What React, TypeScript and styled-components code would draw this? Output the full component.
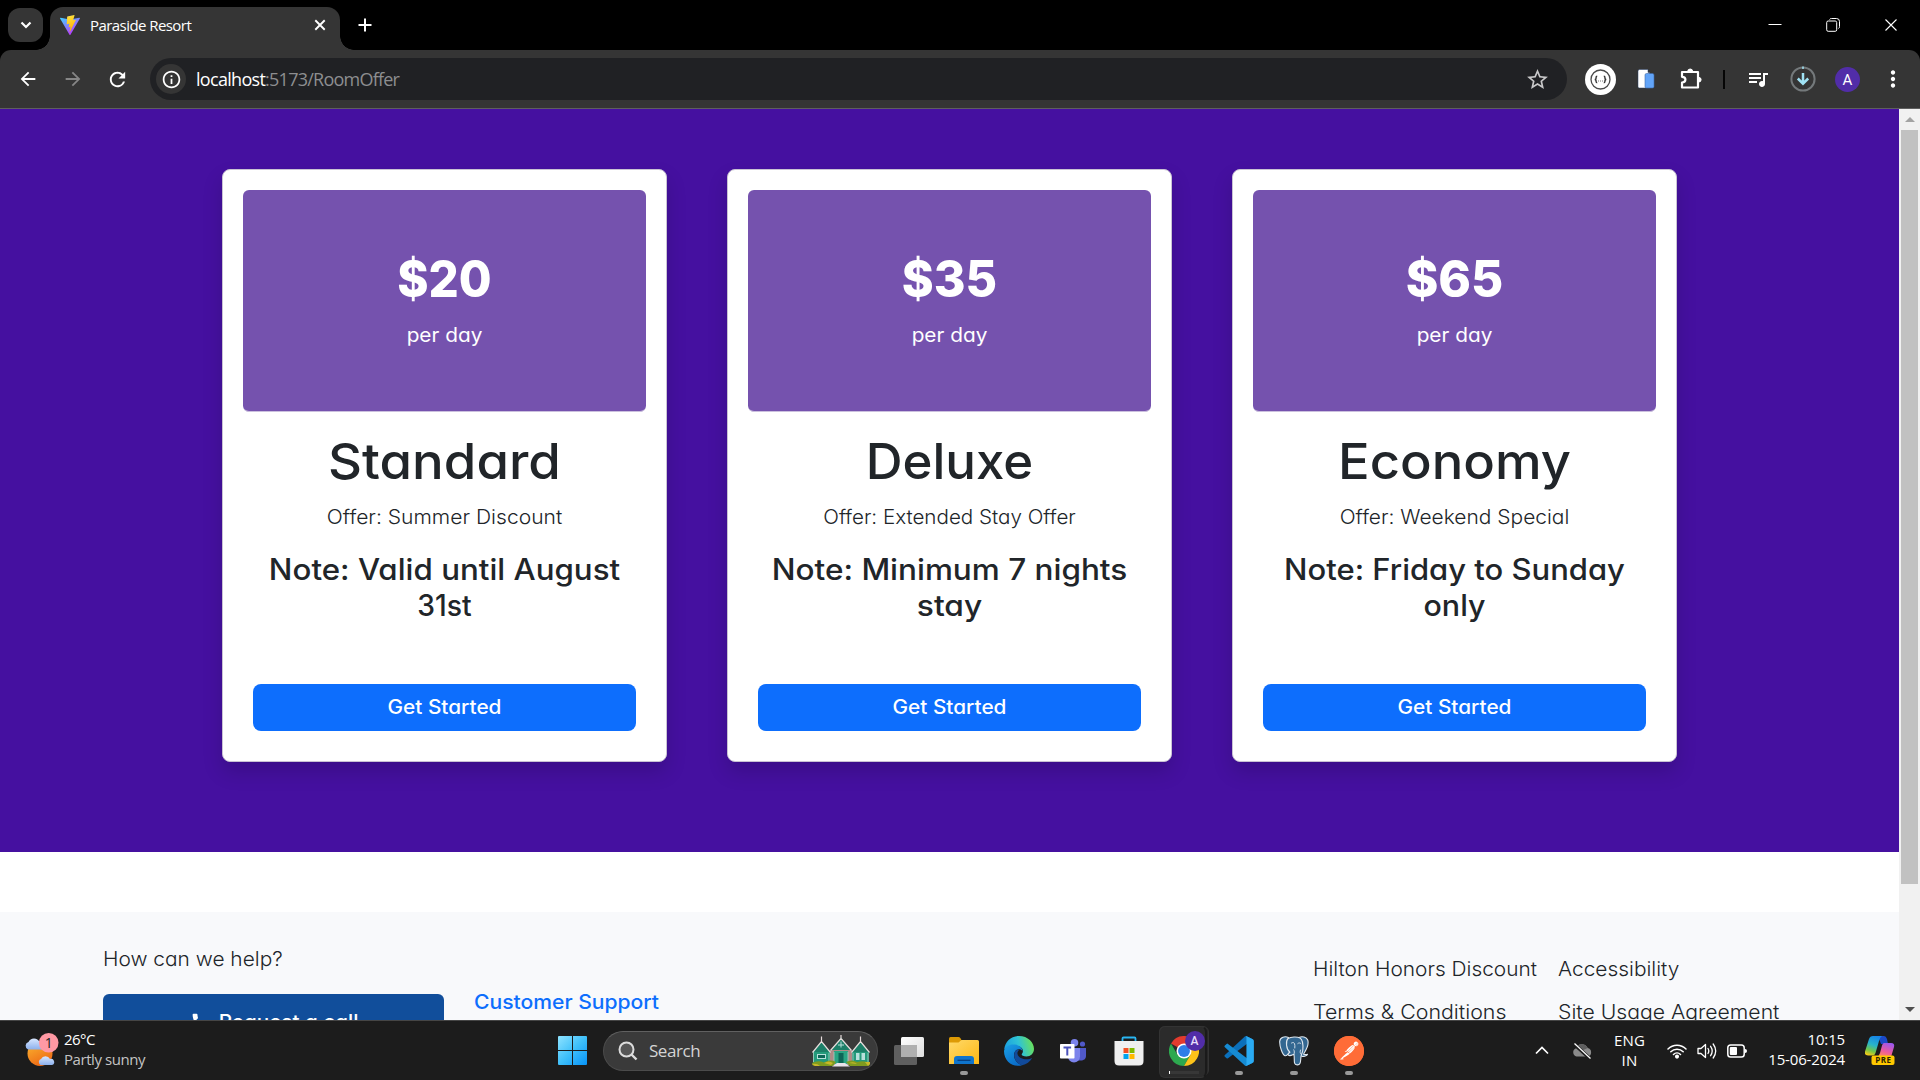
import React from "react";
import styled, { createGlobalStyle } from "styled-components";
import { MdArrowBack, MdArrowForward, MdRefresh, MdStarOutline, MdQueueMusic, MdInfoOutline, MdMoreVert, MdPhone } from "react-icons/md";
import { SiPostman } from "react-icons/si";

const ui = `"Open Sans", "Noto Sans", sans-serif`;
const body = `Inter, "Liberation Sans", sans-serif`;

const GlobalStyle = createGlobalStyle`
  * { box-sizing: border-box; }
  body { margin: 0; overflow: hidden; background: #000; }
  p, h1, h2, h3 { margin: 0; }
  svg { display: block; flex: none; }
`;

const Screen = styled.div`
  width: 1920px;
  height: 1080px;
  display: flex;
  flex-direction: column;
  overflow: hidden;
`;

/* ---------- Browser chrome ---------- */

const TabStrip = styled.div`
  height: 50px;
  flex: none;
  display: flex;
  background: #000;
  padding: 7px 0 0 8px;
  color: #fff;
`;

const TabSearch = styled.div`
  width: 35px;
  height: 34px;
  margin: 1px 7px 0 0;
  border-radius: 12px;
  background: #353535;
  display: grid;
  place-items: center;
`;

const Tab = styled.div`
  position: relative;
  width: 290px;
  height: 43px;
  padding: 0 14px 7px 10px;
  display: flex;
  align-items: center;
  border-radius: 13px 13px 0 0;
  background: #353535;
  &::before,
  &::after {
    content: "";
    position: absolute;
    bottom: 0;
    width: 14px;
    height: 14px;
  }
  &::before {
    left: -14px;
    background: radial-gradient(circle at 0 0, transparent 13.5px, #353535 14px);
  }
  &::after {
    right: -14px;
    background: radial-gradient(circle at 100% 0, transparent 13.5px, #353535 14px);
  }
`;

const TabTitle = styled.span`
  flex: 1;
  margin-left: 10px;
  font: 400 15px/20px ${ui};
  letter-spacing: -0.56px;
`;

const NewTab = styled.div`
  width: 20px;
  height: 36px;
  margin-left: 15px;
  display: grid;
  place-items: center;
`;

const WindowControls = styled.div`
  display: flex;
  align-items: center;
  gap: 44px;
  height: 35px;
  margin-left: auto;
  padding-right: 22px;
`;

const ToolbarBack = styled.div`
  background: #000;
  flex: none;
`;

const Toolbar = styled.div`
  height: 59px;
  display: flex;
  align-items: center;
  padding: 0 5px;
  background: #353535;
  border-bottom: 1px solid #5f5f5f;
  border-radius: 11px 11px 0 0;
  color: #fff;
`;

const ToolCell = styled.div<{ $dim?: boolean }>`
  width: 45px;
  height: 42px;
  display: grid;
  place-items: center;
  color: ${(p) => (p.$dim ? "#868686" : "#fff")};
`;

const AddressBar = styled.div`
  width: 1417px;
  height: 42px;
  margin: 0 11px 0 10px;
  padding: 0 17px 0 6px;
  border-radius: 21px;
  background: #202124;
  display: flex;
  align-items: center;
`;

const SiteInfo = styled.div`
  width: 30px;
  height: 30px;
  border-radius: 50%;
  background: #353535;
  display: grid;
  place-items: center;
`;

const Url = styled.div`
  flex: 1;
  margin-left: 10px;
  font: 400 18px/24px ${ui};
  letter-spacing: -0.7px;
  color: #fff;
  span { color: #8d8e90; letter-spacing: -0.76px; }
`;

const ToolDivider = styled.div`
  width: 2px;
  height: 19px;
  margin: 0 10px;
  background: #050505;
`;

const Avatar = styled.div`
  width: 25px;
  height: 25px;
  border-radius: 50%;
  background: #512da8;
  color: #fff;
  font: 400 15px/26px Roboto, sans-serif;
  text-align: center;
`;

/* ---------- Page ---------- */

const Viewport = styled.div`
  height: 911px;
  flex: none;
  display: flex;
  overflow: hidden;
  background: #fff;
`;

const Page = styled.div`
  width: 1899px;
  flex: none;
  font-family: ${body};
  font-feature-settings: "cv11";
  color: #212529;
`;

const Offers = styled.section`
  height: 743px;
  display: flex;
  justify-content: center;
  align-items: flex-start;
  gap: 60px;
  padding-top: 60px;
  background: #4510a0;
`;

const Card = styled.article`
  width: 445px;
  height: 593px;
  padding: 20px;
  display: flex;
  flex-direction: column;
  text-align: center;
  background: #fff;
  border: 1px solid #c9c3d3;
  border-radius: 8px;
  box-shadow: 0 10px 20px rgba(0, 0, 0, 0.15);
`;

const CardHeader = styled.div`
  height: 222px;
  padding-top: 59px;
  background: #7552ae;
  border-bottom: 1px solid #cbc0de;
  border-radius: 6px;
  color: #fff;
`;

const Stretch = styled.span<{ $by: number; $left?: boolean }>`
  display: block;
  white-space: nowrap;
  transform: scaleX(${(p) => p.$by});
  transform-origin: ${(p) => (p.$left ? "left" : "center")};
`;

const Price = styled.h2`
  font-size: 50.5px;
  font-weight: 800;
  line-height: 60px;
`;

const Per = styled.p`
  margin-top: 11px;
  font-size: 20px;
  line-height: 30px;
`;

const RoomType = styled.h1`
  margin-top: 19px;
  font-size: 50px;
  font-weight: 500;
  line-height: 60px;
`;

const OfferLine = styled.p`
  margin-top: 11px;
  font-size: 20px;
  font-weight: 300;
  line-height: 30px;
`;

const NoteLine = styled.h3`
  margin-top: 19px;
  font-size: 29.5px;
  font-weight: 500;
  line-height: 36px;
`;

const StartButton = styled.button`
  height: 47px;
  margin: 61px 10px 0;
  padding: 0 0 2px;
  border: 0;
  border-radius: 8px;
  background: #0d6efd;
  color: #fff;
  font: 450 20px/30px ${body};
  font-feature-settings: "cv11";
`;

const Footer = styled.footer`
  margin-top: 60px;
  height: 300px;
  padding: 32px 0 0 103px;
  display: flex;
  background: #f8f9fb;
  font-size: 20px;
  line-height: 30px;
  font-weight: 300;
`;

const HelpColumn = styled.div`
  width: 341px;
`;

const CallButton = styled.button`
  width: 341px;
  height: 60px;
  margin-top: 20px;
  padding: 0 0 5px 0;
  display: flex;
  justify-content: center;
  align-items: center;
  gap: 10px;
  border: 0;
  border-radius: 6px;
  background: #114e9b;
  color: #fff;
  font: 450 20px/30px ${body};
  font-feature-settings: "cv11";
`;

const SupportLink = styled.a`
  width: 839px;
  margin: 43px 0 0 30px;
  font-weight: 450;
  color: #0d6efd;
`;

const LinkColumn = styled.div<{ $width: number }>`
  width: ${(p) => p.$width}px;
  margin-top: 10px;
  display: flex;
  flex-direction: column;
  gap: 13px;
`;

const Scrollbar = styled.div`
  width: 21px;
  display: flex;
  flex-direction: column;
  align-items: center;
  background: #f1f1f1;
`;

const ScrollArrow = styled.div<{ $dim?: boolean }>`
  width: 21px;
  height: 21px;
  display: grid;
  place-items: center;
  color: ${(p) => (p.$dim ? "#a3a3a3" : "#505050")};
`;

const Thumb = styled.div`
  width: 17px;
  height: 754px;
  margin-bottom: auto;
  background: #c1c1c1;
`;

/* ---------- Taskbar ---------- */

const Taskbar = styled.div`
  height: 60px;
  flex: none;
  display: flex;
  align-items: center;
  background: #1c1c1c;
  border-top: 1px solid #454545;
  color: #fff;
  font: 400 15px/20px ${ui};
`;

const Weather = styled.div`
  width: 534px;
  padding-left: 24px;
  display: flex;
  align-items: center;
  gap: 5px;
`;

const WeatherLabels = styled.div`
  padding-bottom: 4px;
`;

const WeatherText = styled.div<{ $muted?: boolean }>`
  color: ${(p) => (p.$muted ? "#c4c4c4" : "#fff")};
  letter-spacing: ${(p) => (p.$muted ? -0.43 : -0.53)}px;
`;

const StartCell = styled.div`
  width: 69px;
  padding-left: 24px;
`;

const SearchBox = styled.div`
  width: 275px;
  height: 40px;
  padding: 0 7px 0 14px;
  display: flex;
  align-items: center;
  border: 1px solid #4b4b4b;
  border-top-color: #606060;
  border-radius: 20px;
  background: #3a3a3a;
`;

const SearchLabel = styled.span`
  flex: 1;
  margin-left: 11px;
  font-size: 17px;
  letter-spacing: -0.45px;
  color: #d4d4d4;
`;

const Apps = styled.div`
  display: flex;
  margin-left: 3px;
`;

const AppCell = styled.div`
  position: relative;
  width: 55px;
  height: 58px;
  display: grid;
  place-items: center;
`;

const RunningDot = styled.i`
  position: absolute;
  left: 24px;
  bottom: 5px;
  width: 8px;
  height: 4px;
  border-radius: 2px;
  background: #999;
`;

const ActiveTile = styled.div`
  position: relative;
  width: 50px;
  height: 50px;
  padding-left: 9px;
  display: flex;
  align-items: center;
  border-radius: 6px;
  border: 1px solid #333;
  background: #272727;
  &::before {
    content: "";
    position: absolute;
    left: -1px;
    top: -1px;
    width: 45px;
    height: 50px;
    border: 1px solid #333;
    border-right: 2px solid #1a1a1a;
    border-radius: 6px;
    background: #2b2b2b;
  }
  svg { position: relative; }
`;

const Progress = styled.i`
  position: absolute;
  left: 9px;
  bottom: 1px;
  width: 30px;
  height: 3px;
  border-left: 1px solid #fff;
  background: #373737;
`;

const Badge = styled.span`
  position: absolute;
  left: 25px;
  top: 4px;
  width: 20px;
  height: 20px;
  border-radius: 50%;
  background: #512da8;
  color: #e6defa;
  font: 500 12px/20px Roboto, sans-serif;
  text-align: center;
`;

const Tray = styled.div`
  margin-left: auto;
  display: flex;
  align-items: center;
  padding-right: 25px;
`;

const Language = styled.div`
  width: 75px;
  text-align: center;
  letter-spacing: 0.15px;
  padding-bottom: 2px;
`;

const TrayIcons = styled.div`
  display: flex;
  align-items: center;
  gap: 10px;
`;

const Clock = styled.div`
  width: 98px;
  margin-right: 20px;
  padding-bottom: 4px;
  text-align: right;
  letter-spacing: -0.15px;
`;

/* ---------- Drawings ---------- */

const ViteLogo = () => (
  <svg width="20" height="20" viewBox="0 0 32 32">
    <defs>
      <linearGradient id="va" x1="0" y1="0" x2=".6" y2="1"><stop offset="0" stopColor="#41d1ff" /><stop offset="1" stopColor="#bd34fe" /></linearGradient>
      <linearGradient id="vb" x1=".4" y1="0" x2=".6" y2="1"><stop offset="0" stopColor="#ffea83" /><stop offset=".1" stopColor="#ffdd35" /><stop offset="1" stopColor="#ffa800" /></linearGradient>
    </defs>
    <path fill="url(#va)" d="M31.8 5.7 16.7 31.6a.9.9 0 0 1-1.5 0L.1 5.7A.9.9 0 0 1 1 4.4l15 2.7 14.900-2.700a.9.9 0 0 1 .9 1.300z" />
    <path fill="url(#vb)" d="M22.900.1 11.800 2.300a.4.4 0 0 0-.3.4l-.7 11.500c0 .3.2.5.5.4l3.100-.7c.3 0 .6.200.5.5l-1 4.500c0 .3.200.6.5.5l1.900-.6c.3 0 .6.200.5.5l-1.500 7c0 .4.500.7.7.3l.2-.2 9-18c.2-.3-.1-.7-.4-.6l-3.200.6c-.3 0-.6-.2-.5-.5l2.100-7.200c.1-.3-.2-.6-.5-.5z" />
  </svg>
);

const Cross = ({ size, stroke }: { size: number; stroke: number }) => (
  <svg width={size} height={size} viewBox="0 0 14 14" stroke="#fff" strokeWidth={stroke} fill="none"><path d="M1.500 1.500 12.500 12.500M12.500 1.500 1.500 12.500" /></svg>
);

const Puzzle = () => (
  <svg width="22" height="22" viewBox="0 0 22 22" fill="none" stroke="#fff" strokeWidth="2.200" strokeLinejoin="round">
    <path d="M2 4h16v15.500H2v-5c2 0 3.400-1.200 3.400-2.900S4 8.800 2 8.800z" />
    <path d="M7.700 3.500a2.500 2.500 0 0 1 5 0zM18.800 9.400a2.200 2.200 0 0 1 0 4.600z" fill="#fff" strokeWidth="1" />
  </svg>
);

const BracesBadge = () => (
  <svg width="31" height="31" viewBox="0 0 31 31" fill="none">
    <circle cx="15.500" cy="15.500" r="15.500" fill="#fff" />
    <circle cx="15.500" cy="15.500" r="9.500" stroke="#4a4a4a" strokeWidth="1.300" />
    <path d="M12.200 12.200c-1.700 0-1 1.900-1.300 2.700q-.3.600-1.200.6.900 0 1.200.600c.3.800-.4 2.700 1.300 2.700M18.800 12.200c1.700 0 1 1.900 1.300 2.700q.3.600 1.200.6-.9 0-1.200.600c-.3.800.4 2.700-1.300 2.700" stroke="#333" strokeWidth="1.400" />
    <path d="M13 17h1M15 17h1M17 17h1" stroke="#777" />
  </svg>
);

const Docs = () => (
  <svg width="18" height="20" viewBox="0 0 18 20">
    <path d="M1 2q0-1.500 1.500-1.500h8.500v3h1.500v15.500H2.500Q1 19 1 17.500z" fill="#fff" stroke="#29406b" strokeWidth=".5" />
    <rect x="8" y="4.500" width="9" height="14.500" rx="1.500" fill="#62a4f8" stroke="#3c68a8" strokeWidth=".6" />
  </svg>
);

const Download = () => (
  <svg width="26" height="26" viewBox="0 0 26 26" fill="none">
    <circle cx="13" cy="13" r="11.600" stroke="#74797b" strokeWidth="2" />
    <path d="M13 .4v2.500" stroke="#a0e3f5" strokeWidth="1.500" />
    <path d="M13 7v10M7.800 12.500 13 17.700l5.200-5.200" stroke="#a0e3f5" strokeWidth="2.500" />
  </svg>
);

const WeatherIcon = () => (
  <svg width="35" height="36" viewBox="0 0 35 36">
    <defs>
      <linearGradient id="sun" x1="0" y1="0" x2=".5" y2="1"><stop offset="0" stopColor="#fbb931" /><stop offset="1" stopColor="#ee6b16" /></linearGradient>
      <linearGradient id="cl" x1="0" y1="0" x2="0" y2="1"><stop offset="0" stopColor="#d8e7ff" /><stop offset="1" stopColor="#8cb0ec" /></linearGradient>
    </defs>
    <circle cx="16" cy="20.500" r="12.500" fill="url(#sun)" />
    <path d="M4 16.500a4 4 0 0 1 .5-7.500 6 6 0 0 1 11 0 3.900 3.900 0 0 1 3 7.500z" fill="url(#cl)" />
    <path d="M16.500 32a3.300 3.300 0 0 1 .5-6 5 5 0 0 1 9 0 3.100 3.100 0 0 1 2 6z" fill="url(#cl)" />
    <circle cx="24.700" cy="9.800" r="9.800" fill="#ff99a4" />
    <text x="24.700" y="15" fontSize="14" textAnchor="middle" fill="#222" fontFamily="Open Sans">1</text>
  </svg>
);

const WindowsLogo = () => (
  <svg width="29" height="29" viewBox="0 0 29 29">
    <defs><linearGradient id="win" gradientUnits="userSpaceOnUse" x1="0" y1="0" x2="29" y2="29"><stop offset="0" stopColor="#8fe3ff" /><stop offset=".5" stopColor="#3fc0fa" /><stop offset="1" stopColor="#0793f8" /></linearGradient></defs>
    <path fill="url(#win)" d="M0 1q0-1 1-1h13v14H0zM15 0h13q1 0 1 1v13H15zM0 15h14v14H1q-1 0-1-1zM15 15h14v13q0 1-1 1H15z" />
  </svg>
);

const Magnifier = () => (
  <svg width="20" height="20" viewBox="0 0 20 20" fill="none" stroke="#dcdcdc" strokeWidth="2">
    <circle cx="8.500" cy="8.500" r="7" fill="#565656" /><path d="m13.500 13.500 5 5" strokeWidth="2.400" />
  </svg>
);

const Houses = () => (
  <svg width="58" height="32" viewBox="0 0 58 32">
    <path d="M18 16 29 4l11 12v14H18z" fill="#b08a86" />
    <path d="M1 16h17v13H1zM40 16h17v13H40z" fill="#249a7b" />
    <path d="M22 16h14v13H22z" fill="#2aa583" />
    <path d="M1 17 9.500 6 18 17zM40 17 48.500 6 57 17zM19 15 29 2.500 39 15z" fill="#1c7f68" />
    <path d="M.5 17.500 9.500 6.500 18.500 17.500M39.500 17.500 48.500 6.500 57.500 17.500M18.500 15.500 29 3.500 39.500 15.500M9.500 6.500v-5M48.500 6.500v-5M29 4v-4" stroke="#e8dcdc" strokeWidth="1.200" fill="none" />
    <path d="M22 17v12M36 17v12M1.500 17v10M17 18v9M41 18v9M56 18v9" stroke="#9fc9bd" strokeWidth=".9" fill="none" />
    <path d="M5 19h9v5H5zM44 18h3.500v7H44zM49.500 18H53v7h-3.500z" fill="#b8e0db" />
    <path d="M6 20h7v3H6zM26.500 18h5v11h-5z" fill="#0d6657" />
    <path d="M29 6.500v6M26 10h6" stroke="#b8e0db" />
    <path d="M0 28q6-3 12-.5 6-3.500 12-.5l-3 4H3q-3 0-3-3zM34 27q6-3 11 0 7-2 13 1 0 3-3 3H38z" fill="#7f9b1f" />
    <path d="M0 29q5-1 8 2H3zM12 28q5-3 9 0l-2 2zM37 28q5-2 8 1zM53 27h5v2l-2 2z" fill="#c8b82a" />
    <path d="m25 28-5 3.500h18L33 28z" fill="#e9e3ea" />
  </svg>
);

const TaskView = () => (
  <svg width="30" height="28" viewBox="0 0 30 28">
    <defs><linearGradient id="tv" x1="0" y1="0" x2="1" y2="1"><stop offset="0" stopColor="#fff" /><stop offset="1" stopColor="#dedede" /></linearGradient></defs>
    <rect y="8" width="23" height="20" rx="1.500" fill="#5f5f5f" /><rect x="7" width="23" height="20" rx="1.500" fill="url(#tv)" /><path d="M7 8h16v12H7z" fill="#b0b0b0" />
  </svg>
);

const Folder = () => (
  <svg width="30" height="27" viewBox="0 0 30 27">
    <defs><linearGradient id="fo" x1="0" y1="0" x2="1" y2="1"><stop offset="0" stopColor="#ffd96a" /><stop offset="1" stopColor="#fdb813" /></linearGradient></defs>
    <path d="M0 1.500Q0 0 1.500 0h8q1 0 1.800 1L13 4v8H0z" fill="#dd9a05" />
    <path d="M0 5.500h9.500l3-2.500H28.500Q30 3 30 4.500V27H0z" fill="url(#fo)" />
    <path d="M5 27v-5q0-3 3-3h14q3 0 3 3v5z" fill="#0f74cc" /><path d="M8.500 23.300h13" stroke="#063f80" strokeWidth="1.300" />
  </svg>
);

const Edge = () => (
  <svg width="30" height="30" viewBox="0 0 30 30">
    <defs>
      <linearGradient id="ea" x1="0" y1=".5" x2="1" y2=".3"><stop offset="0" stopColor="#1a9fe0" /><stop offset=".5" stopColor="#2fc3d6" /><stop offset="1" stopColor="#6fe34f" /></linearGradient>
      <linearGradient id="eb" x1="0" y1="0" x2=".6" y2="1"><stop offset="0" stopColor="#1ba1e6" /><stop offset="1" stopColor="#0a6cc9" /></linearGradient>
    </defs>
    <path d="M.2 13.500C1 5.500 7 0 15 0c9 0 15 6.500 15 13 0 4.500-3.500 7.500-7.500 7.500-3.500 0-5.300-1.200-4.700-2.400 2.300-2.500 1.200-8.100-5.300-8.100C6 10 1.500 12.500.2 13.500z" fill="url(#ea)" />
    <path d="M0 15C.6 10.500 6 7.800 11 8.500c4.500.6 7.500 3.500 7.300 6.300-1.300-2.300-5.300-2.300-7.300.7-3 5 1 12 7 13.700C9 32 0 25.500 0 15z" fill="url(#eb)" />
    <path d="M11.200 15.200C8 21 12.500 28 18.200 29.300c4-.8 8-3.600 10-7.300-4.500 2.500-13.500 1.500-14.700-4-.3-1.800.5-3 1.500-3.800-1.500-.3-3 0-3.800 1z" fill="#114a9a" />
  </svg>
);

const Teams = () => (
  <svg width="27" height="24" viewBox="0 0 27 24">
    <circle cx="14.500" cy="3.800" r="3.800" fill="#7b83eb" /><circle cx="22.500" cy="5" r="2.600" fill="#5059c9" />
    <path d="M17 9h9v8c0 3-2.500 4.500-5 4.500h-4z" fill="#5059c9" /><path d="M8 9h12v8.500a6 6 0 0 1-12 0z" fill="#7b83eb" />
    <rect y="5" width="14.500" height="14.500" rx=".8" fill="#fff" /><path d="M3.500 8.600h7.600M7.300 8.600v8" stroke="#4b53bc" strokeWidth="2" />
  </svg>
);

const Store = () => (
  <svg width="30" height="30" viewBox="0 0 30 30">
    <path d="M8.500 6V2.500q0-1 1-1h11q1 0 1 1V6" fill="none" stroke="#29b6f2" strokeWidth="1.800" />
    <path d="M.5 5h29v20q0 4.500-4.500 4.500H5Q.5 29.500.5 25z" fill="#efefef" />
    <path d="M9.500 12h5v5h-5z" fill="#f25022" /><path d="M15.500 12h5v5h-5z" fill="#7fba00" /><path d="M9.500 18h5v5h-5z" fill="#00a4ef" /><path d="M15.500 18h5v5h-5z" fill="#ffb900" />
  </svg>
);

const Chrome = () => (
  <svg width="30" height="30" viewBox="0 0 48 48">
    <path d="M24 24 3.200 12A24 24 0 0 1 44.800 12z" fill="#e33b2e" /><path d="M3.200 12A24 24 0 0 0 24 48L34.400 30 24 24 13.600 30z" fill="#2da94f" /><path d="M44.800 12A24 24 0 0 1 24 48L34.400 30 24 12z" fill="#fdc31a" />
    <path d="M24 12h20.800L40 5 24 8z" fill="#e33b2e" /><circle cx="24" cy="24" r="12" fill="#fff" /><circle cx="24" cy="24" r="9.500" fill="#2f7de9" />
  </svg>
);

const VsCode = () => (
  <svg width="30" height="30" viewBox="0 0 100 100">
    <path d="M96 11 75.500 1.200a6 6 0 0 0-7 1.200L3 63a4 4 0 0 0 0 6l5.500 5a4 4 0 0 0 5 .2L93 13.500z" fill="#0b70bb" />
    <path d="M96 89 75.500 98.800a6 6 0 0 1-7-1.200L3 37.500a4 4 0 0 1 0-6l5.500-5a4 4 0 0 1 5-.2L93 86.500z" fill="#168bd3" />
    <path d="M75.500 98.800a6.200 6.200 0 0 1-7-1.200c2.300 2.300 6.300.7 6.300-2.600V5c0-3.300-4-4.900-6.300-2.600a6.200 6.200 0 0 1 7-1.200l20.600 10a6.200 6.200 0 0 1 3.500 5.600v66.400c0 2.400-1.400 4.600-3.500 5.600z" fill="#2aabf3" />
  </svg>
);

const PostmanMark = styled.div`
  width: 30px;
  height: 30px;
  border-radius: 50%;
  background: radial-gradient(#fff 60%, #ff6c37 62%);
`;

const Elephant = () => (
  <svg width="30" height="30" viewBox="0 0 30 30" fill="#336791" stroke="#dfe7ee" strokeWidth="1.100" strokeLinejoin="round" strokeLinecap="round">
    <path d="M20 1.500c3-1.500 7.500-.5 8.700 2.500 1.200 3.500-1 9-3.200 12.500l-1 1.700c1.500.4 3 .3 4 0-.6 1.500-3.500 2.500-5.500 2.200L20 18z" />
    <path d="M9.500 1.500C6 0 1 1 .7 5.500.5 10 3.500 19.500 6.300 19.800c1.800.2 3-2.300 4.200-3.500z" />
    <path d="M9 2.500C12 .8 18 .3 21 2c3 2 3.200 7.500 2.800 12-.2 2.500-1 3.500-1.500 5-.8 2.700-.3 6-1.300 8.300-1 2.200-4.800 2.200-5.500-.5-.5-2.500.1-6-.6-8.500-1.500.5-2.800 1.800-5 1.200-1.500-.5-.5-2.300 1-3.300C7 13 6.500 5 9 2.500z" />
    <path d="M12.500 7c1.300-.8 2.500-.5 3 .5.500 1.200.4 3 .3 4.500M18.800 7.500c1-.9 2.300-.7 3 0M15 18.300c.6-1.300.5-3.300-.2-4.500M22.300 18.500c-1.300-1-1.500-3-.8-4.500" fill="none" strokeWidth=".9" />
  </svg>
);

const Cloud = () => (
  <svg width="20" height="18" viewBox="0 0 20 18">
    <path d="M4.500 14.500A4.300 4.300 0 0 1 4 6.300 6.300 6.300 0 0 1 15.700 6a4.400 4.400 0 0 1 .3 8.500z" fill="#8a8a8a" /><path d="M4 6.300A6.300 6.300 0 0 1 15.700 6L9 9z" fill="#5f5f5f" />
    <path d="m2 2 16.500 15" stroke="#1c1c1c" strokeWidth="3.500" /><path d="m2.500 1.500 16 15" stroke="#fff" strokeWidth="1.200" />
  </svg>
);

const Wifi = () => (
  <svg width="20" height="16" viewBox="0 0 20 16" fill="none" stroke="#fff" strokeWidth="1.500" strokeLinecap="round">
    <path d="M1 6a12.500 12.500 0 0 1 18 0M3.800 8.800a8.700 8.700 0 0 1 12.400 0M6.500 11.500a5 5 0 0 1 7 0" /><circle cx="10" cy="13.600" r="1.300" fill="#fff" />
  </svg>
);

const Volume = () => (
  <svg width="20" height="18" viewBox="0 0 20 18" fill="none" stroke="#fff" strokeWidth="1.300" strokeLinecap="round" strokeLinejoin="round">
    <path d="M1 6.500h3L8.500 2.500v13L4 11.500H1zM11 6.500q1.600 2.500 0 5M13.600 4.300q3.200 4.700 0 9.400M16.200 2q5 7 0 14" />
  </svg>
);

const Battery = () => (
  <svg width="20" height="14" viewBox="0 0 20 14"><rect x=".8" y="1" width="16.400" height="12" rx="2.800" fill="none" stroke="#fff" strokeWidth="1.500" /><rect x="2.800" y="3" width="7.200" height="8" rx="1" fill="#fff" /><path d="M18 5q2 0 2 2t-2 2z" fill="#fff" /></svg>
);

const Copilot = () => (
  <svg width="30" height="29" viewBox="0 0 30 29">
    <defs>
      <linearGradient id="ca" x1=".6" y1="0" x2=".3" y2="1"><stop offset="0" stopColor="#1686e8" /><stop offset=".45" stopColor="#29b5c9" /><stop offset=".75" stopColor="#6fc64a" /><stop offset="1" stopColor="#f2c918" /></linearGradient>
      <linearGradient id="cb" x1=".7" y1="0" x2=".3" y2="1"><stop offset="0" stopColor="#9b58ee" /><stop offset=".6" stopColor="#ee5a9c" /><stop offset="1" stopColor="#fb8a5a" /></linearGradient>
    </defs>
    <path d="M13 0h6q2 0 3 3l1 5h-7z" fill="#1b49c8" />
    <path d="M8 0h9q-2 1-3 5l-3.500 12q-.8 2.500-3 2.500H3q-4 0-3-4L4 3q1-3 4-3z" fill="url(#ca)" />
    <path d="M19 7h7q4 0 3 4l-3 10H12q2-1 3-4l2-7.500Q17.700 7 19 7z" fill="url(#cb)" />
    <rect x="6.500" y="19.500" width="23" height="9.500" rx="2" fill="#ffc800" />
    <text x="18.300" y="27.200" fontSize="8" fontWeight="700" textAnchor="middle" letterSpacing=".4" fill="#2a2200" fontFamily="Open Sans">PRE</text>
  </svg>
);

/* ---------- Data ---------- */

type Line = [text: string, stretch: number];
const rooms: { price: Line; type: Line; offer: Line; note: Line[] }[] = [
  { price: ["$20", 0.94], type: ["Standard", 1.054], offer: ["Offer: Summer Discount", 1.053], note: [["Note: Valid until August", 1.06], ["31st", 0.96]] },
  { price: ["$35", 0.96], type: ["Deluxe", 1.02], offer: ["Offer: Extended Stay Offer", 1.03], note: [["Note: Minimum 7 nights", 1.067], ["stay", 1.075]] },
  { price: ["$65", 0.98], type: ["Economy", 1.05], offer: ["Offer: Weekend Special", 1.047], note: [["Note: Friday to Sunday", 1.05], ["only", 1.03]] },
];
const links: { width: number; items: Line[] }[] = [
  { width: 245, items: [["Hilton Honors Discount", 1.042], ["Terms & Conditions", 1.068]] },
  { width: 240, items: [["Accessibility", 1.045], ["Site Usage Agreement", 1.06]] },
];
const apps: { icon: React.ReactNode; running?: boolean }[] = [
  { icon: <TaskView /> },
  { icon: <Folder />, running: true },
  { icon: <Edge /> },
  { icon: <Teams /> },
  { icon: <Store /> },
  { icon: <ActiveTile><Chrome /><Badge>A</Badge><Progress /></ActiveTile> },
  { icon: <VsCode />, running: true },
  { icon: <Elephant />, running: true },
  { icon: <PostmanMark><SiPostman size={30} color="#ff6c37" /></PostmanMark>, running: true },
];

export default function App() {
  return (
    <Screen>
      <GlobalStyle />
      <TabStrip>
        <TabSearch>
          <svg width="12" height="8" viewBox="0 0 12 8" fill="none" stroke="#fff" strokeWidth="2.200"><path d="m1.500 1.500 4.500 4.500 4.500-4.500" /></svg>
        </TabSearch>
        <Tab>
          <ViteLogo />
          <TabTitle>Paraside Resort</TabTitle>
          <Cross size={12} stroke={2.2} />
        </Tab>
        <NewTab>
          <svg width="14" height="14" viewBox="0 0 14 14" stroke="#fff" strokeWidth="2"><path d="M7 .5v13M.5 7h13" /></svg>
        </NewTab>
        <WindowControls>
          <svg width="14" height="14" viewBox="0 0 14 14"><path d="M.5 6.500h13" stroke="#fff" /></svg>
          <svg width="14" height="14" viewBox="0 0 14 14" fill="none" stroke="#fff"><rect x=".7" y="3" width="10" height="10.300" rx="1.500" /><path d="M3.500 1.500q.5-1 2-1H10.500q3 0 3 3v5q0 1.500-1 2" /></svg>
          <Cross size={14} stroke={1.1} />
        </WindowControls>
      </TabStrip>
      <ToolbarBack>
        <Toolbar>
          <ToolCell><MdArrowBack size={22} /></ToolCell>
          <ToolCell $dim><MdArrowForward size={22} /></ToolCell>
          <ToolCell><MdRefresh size={23} /></ToolCell>
          <AddressBar>
            <SiteInfo><MdInfoOutline size={21} /></SiteInfo>
            <Url>localhost<span>:5173/RoomOffer</span></Url>
            <MdStarOutline size={25} color="#c8c8c9" />
          </AddressBar>
          <ToolCell><BracesBadge /></ToolCell>
          <ToolCell><Docs /></ToolCell>
          <ToolCell><Puzzle /></ToolCell>
          <ToolDivider />
          <ToolCell><MdQueueMusic size={24} /></ToolCell>
          <ToolCell><Download /></ToolCell>
          <ToolCell><Avatar>A</Avatar></ToolCell>
          <ToolCell><MdMoreVert size={26} /></ToolCell>
        </Toolbar>
      </ToolbarBack>

      <Viewport>
        <Page>
          <Offers>
            {rooms.map((r) => (
              <Card key={r.type[0]}>
                <CardHeader>
                  <Price><Stretch $by={r.price[1]}>{r.price[0]}</Stretch></Price>
                  <Per><Stretch $by={1.04}>per day</Stretch></Per>
                </CardHeader>
                <RoomType><Stretch $by={r.type[1]}>{r.type[0]}</Stretch></RoomType>
                <OfferLine><Stretch $by={r.offer[1]}>{r.offer[0]}</Stretch></OfferLine>
                <NoteLine>{r.note.map(([t, by]) => <Stretch key={t} $by={by}>{t}</Stretch>)}</NoteLine>
                <StartButton><Stretch $by={1.04}>Get Started</Stretch></StartButton>
              </Card>
            ))}
          </Offers>
          <Footer>
            <HelpColumn>
              <Stretch $left $by={1.044}>How can we help?</Stretch>
              <CallButton><MdPhone size={21} /><Stretch $by={1.035}>Request a call</Stretch></CallButton>
            </HelpColumn>
            <SupportLink><Stretch $left $by={1.055}>Customer Support</Stretch></SupportLink>
            {links.map((c) => (
              <LinkColumn key={c.width} $width={c.width}>
                {c.items.map(([t, by]) => <Stretch key={t} $left $by={by}>{t}</Stretch>)}
              </LinkColumn>
            ))}
          </Footer>
        </Page>
        <Scrollbar>
          <ScrollArrow $dim><svg width="10" height="5" viewBox="0 0 10 5"><path d="M0 5 5 0l5 5z" fill="currentColor" /></svg></ScrollArrow>
          <Thumb />
          <ScrollArrow><svg width="10" height="5" viewBox="0 0 10 5"><path d="M0 0 5 5l5-5z" fill="currentColor" /></svg></ScrollArrow>
        </Scrollbar>
      </Viewport>

      <Taskbar>
        <Weather>
          <WeatherIcon />
          <WeatherLabels>
            <WeatherText>26°C</WeatherText>
            <WeatherText $muted>Partly sunny</WeatherText>
          </WeatherLabels>
        </Weather>
        <StartCell><WindowsLogo /></StartCell>
        <SearchBox>
          <Magnifier />
          <SearchLabel>Search</SearchLabel>
          <Houses />
        </SearchBox>
        <Apps>
          {apps.map((a, i) => (
            <AppCell key={i}>{a.icon}{a.running && <RunningDot />}</AppCell>
          ))}
        </Apps>
        <Tray>
          <svg width="14" height="9" viewBox="0 0 14 9" fill="none" stroke="#fff" strokeWidth="1.700" style={{ marginRight: 23 }}><path d="m1 7.500 6-6 6 6" /></svg>
          <Cloud />
          <Language>ENG<br />IN</Language>
          <TrayIcons><Wifi /><Volume /><Battery /></TrayIcons>
          <Clock>10:15<br />15-06-2024</Clock>
          <Copilot />
        </Tray>
      </Taskbar>
    </Screen>
  );
}
